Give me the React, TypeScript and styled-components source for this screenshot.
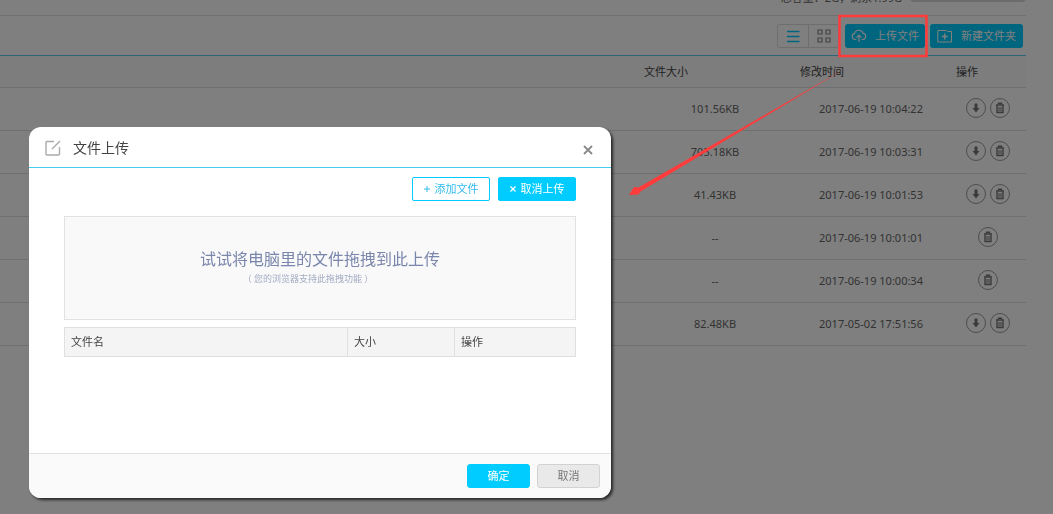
import React from "react";
import styled, { createGlobalStyle, css } from "styled-components";

const GlobalStyle = createGlobalStyle`
  *, *::before, *::after { box-sizing: border-box; }
  body {
    margin: 0;
    background: #fff;
    color: #444;
    font-family: "Noto Sans", "Noto Sans CJK SC", sans-serif;
    font-size: 11px;
    line-height: 16px;
  }
  button { font: inherit; cursor: pointer; }
  svg { display: block; }
`;

const accent = "#00ccff";

const Page = styled.main`
  min-height: 100vh;
  padding-right: 27px;
`;

const CapacityBar = styled.header`
  display: flex;
  align-items: flex-end;
  justify-content: flex-end;
  gap: 8px;
  height: 16px;
  padding-bottom: 9px;
  overflow: hidden;
  border-bottom: 1px solid #e0e0e0;
  color: #666;
`;

const CapacityTrack = styled.div`
  width: 116px;
  height: 10px;
  margin-bottom: 4px;
  border-radius: 4px;
  background: #d8d8d8;
`;

const Toolbar = styled.div`
  display: flex;
  align-items: center;
  justify-content: flex-end;
  height: 40px;
  padding-right: 3px;
  border-bottom: 1px solid #55ccee;
`;

const ViewToggle = styled.div`
  display: flex;
  height: 24px;
  margin-right: 6px;
  border: 1px solid #dcdcdc;
  border-radius: 3px;
`;

const ViewButton = styled.button`
  display: flex;
  align-items: center;
  justify-content: center;
  width: 30px;
  padding: 0;
  border: 0;
  background: none;
  color: #888;

  & + & { border-left: 1px solid #dcdcdc; }
  &[aria-pressed="true"] { color: ${accent}; }
`;

const ToolButton = styled.button`
  display: flex;
  align-items: center;
  gap: 8px;
  height: 24px;
  padding: 0 6px;
  border: 0;
  border-radius: 3px;
  background: ${accent};
  color: #fff;

  & + & {
    margin-left: 5px;
    padding: 0 7px;
  }
`;

const FileTable = styled.table`
  width: 100%;
  border-collapse: separate;
  border-spacing: 0;
  table-layout: fixed;

  th {
    height: 32px;
    padding: 0 7px;
    border-bottom: 1px solid #dedede;
    background: #fafafa;
    font-weight: 400;
    text-align: left;
  }
  td {
    height: 43px;
    padding: 0 7px;
    border-bottom: 1px solid #dedede;
    color: #666;
    text-align: center;
  }
`;

const Col = styled.col<{ $width?: number }>`
  width: ${(p) => (p.$width ? `${p.$width}px` : "auto")};
`;

const RowActions = styled.div`
  display: flex;
  justify-content: center;
  gap: 4px;
  padding-bottom: 2px;
`;

const RoundButton = styled.button`
  display: flex;
  align-items: center;
  justify-content: center;
  width: 20px;
  height: 20px;
  padding: 0;
  border: 1px solid #999;
  border-radius: 50%;
  background: none;
  color: #777;
`;

const Overlay = styled.div`
  position: fixed;
  inset: 0;
  padding: 127px 29px 16px;
  background: rgba(0, 0, 0, 0.5);
`;

const Dialog = styled.section`
  display: flex;
  flex-direction: column;
  max-width: 582px;
  border-radius: 12px;
  background: #fff;
  box-shadow: 2px 2px 3px rgba(0, 0, 0, 0.7);
  overflow: hidden;
`;

const DialogHeader = styled.header`
  display: flex;
  align-items: center;
  gap: 12px;
  height: 41px;
  padding: 2px 18px 0 16px;
  border-bottom: 1px solid #44ccee;
  color: #aaa;
`;

const DialogTitle = styled.h2`
  flex: 1;
  margin: 0;
  color: #444;
  font-size: 14px;
  font-weight: 400;
  line-height: 20px;
`;

const CloseButton = styled.button`
  padding: 3px 0 0;
  border: 0;
  background: none;
  color: #888;
`;

const DialogBody = styled.div`
  min-height: 285px;
  padding: 9px 35px;
`;

const UploadActions = styled.div`
  display: flex;
  justify-content: flex-end;
  gap: 8px;
  margin-bottom: 15px;
`;

const filled = css`
  border-color: ${accent};
  background: ${accent};
  color: #fff;
`;

const UploadButton = styled.button<{ $filled?: boolean }>`
  display: flex;
  align-items: center;
  justify-content: center;
  gap: 5px;
  width: 78px;
  height: 24px;
  padding: 0;
  border: 1px solid ${accent};
  border-radius: 2px;
  background: #fff;
  color: #33bbee;
  ${(p) => p.$filled && filled}
`;

const DropZone = styled.div`
  display: flex;
  flex-direction: column;
  align-items: center;
  justify-content: center;
  height: 104px;
  margin-bottom: 7px;
  padding-bottom: 2px;
  border: 1px solid #e2e2e2;
  background: #f9f9f9;
  text-align: center;
`;

const DropTitle = styled.p`
  margin: 0;
  color: #7a86ab;
  font-size: 16px;
  line-height: 24px;
`;

const DropHint = styled.p`
  margin: 0;
  padding-right: 24px;
  color: #a3abc4;
  font-size: 9px;
  line-height: 16px;
`;

const QueueTable = styled.table`
  width: 100%;
  border: 1px solid #e0e0e0;
  border-collapse: collapse;
  table-layout: fixed;

  th {
    height: 29px;
    padding: 0 6px;
    border: 1px solid #e0e0e0;
    background: #f4f4f4;
    font-weight: 400;
    text-align: left;
  }
`;

const DialogFooter = styled.footer`
  display: flex;
  justify-content: flex-end;
  gap: 7px;
  height: 45px;
  padding: 10px 11px;
  border-top: 1px solid #e0e0e0;
  background: #fafafa;
`;

const FooterButton = styled.button<{ $filled?: boolean }>`
  width: 63px;
  height: 24px;
  padding: 0;
  border: 1px solid #d2d2d2;
  border-radius: 3px;
  background: #e9e9e9;
  color: #777;
  ${(p) => p.$filled && filled}
`;

const Annotation = styled.svg`
  position: absolute;
  top: 0;
  right: 0;
  pointer-events: none;
`;

const ListIcon = () => (
  <svg width="14" height="14" viewBox="0 0 14 14" stroke="currentColor" strokeWidth="1.4" aria-hidden="true">
    <path d="M1 2.500h12.500M1 7.500h12.500M1 12.500h12.500" />
  </svg>
);

const GridIcon = () => (
  <svg width="14" height="14" viewBox="0 0 14 14" fill="none" stroke="currentColor" strokeWidth="1.2" aria-hidden="true">
    <path d="M1 1h4v4H1zM9 1h4v4H9zM1 9h4v4H1zM9 9h4v4H9z" />
  </svg>
);

const CloudUploadIcon = () => (
  <svg width="16" height="14" viewBox="0 0 16 14" fill="none" stroke="currentColor" strokeWidth="1.2" aria-hidden="true">
    <path d="M5.5 10.5H4A3 3 0 0 1 3.4 4.6A4.6 4.6 0 0 1 12.2 4.4A3.1 3.1 0 0 1 12 10.5H10.500M8 13V6.500M5.500 8.700L8 6.200l2.500 2.500" />
  </svg>
);

const FolderPlusIcon = () => (
  <svg width="16" height="14" viewBox="0 0 16 14" fill="none" stroke="currentColor" aria-hidden="true">
    <path d="M.8 1.500h8.500l1.200 1H14.500v10.500H.8z" />
    <path d="M7.700 4.500v6M4.700 7.500h6" strokeWidth="1.500" />
  </svg>
);

const DownloadIcon = () => (
  <svg width="10" height="12" viewBox="0 0 10 12" fill="currentColor" aria-hidden="true">
    <path d="M3.500 1.500h3V6h2L5 10.500L1.500 6h2z" />
  </svg>
);

const TrashIcon = () => (
  <svg width="10" height="12" viewBox="0 0 10 12" fill="none" stroke="currentColor" aria-hidden="true">
    <path d="M1 3h8" strokeWidth="1.500" />
    <path d="M3.500 2.500V1.300h3v1.200M2 3.500v7h6v-7" strokeWidth="1.400" />
    <path d="M4 5v4.500M6 5v4.500" strokeWidth="1.100" />
  </svg>
);

const EditIcon = () => (
  <svg width="16" height="16" viewBox="0 0 16 16" fill="none" stroke="currentColor" strokeWidth="1.400" aria-hidden="true">
    <path d="M9 1.500H2a1 1 0 0 0-1 1V14a1 1 0 0 0 1 1h11.500a1 1 0 0 0 1-1V7M7 9l8-8" />
  </svg>
);

const CloseIcon = () => (
  <svg width="10" height="10" viewBox="0 0 10 10" stroke="currentColor" strokeWidth="1.800" aria-hidden="true">
    <path d="M1 1l8 8M9 1l-8 8" />
  </svg>
);

const PlusIcon = () => (
  <svg width="6" height="6" viewBox="0 0 6 6" stroke="currentColor" aria-hidden="true">
    <path d="M3 0v6M0 3h6" />
  </svg>
);

const CrossIcon = () => (
  <svg width="6" height="6" viewBox="0 0 6 6" stroke="currentColor" strokeWidth="1.200" aria-hidden="true">
    <path d="M.5.5l5 5M5.500.5l-5 5" />
  </svg>
);

interface FileEntry {
  size: string;
  modified: string;
  downloadable: boolean;
}

const files: FileEntry[] = [
  { size: "101.56KB", modified: "2017-06-19 10:04:22", downloadable: true },
  { size: "705.18KB", modified: "2017-06-19 10:03:31", downloadable: true },
  { size: "41.43KB", modified: "2017-06-19 10:01:53", downloadable: true },
  { size: "--", modified: "2017-06-19 10:01:01", downloadable: false },
  { size: "--", modified: "2017-06-19 10:00:34", downloadable: false },
  { size: "82.48KB", modified: "2017-05-02 17:51:56", downloadable: true },
];

export default function App() {
  return (
    <>
      <GlobalStyle />
      <Page>
        <CapacityBar>
          <span>总容量：2G，剩余1.99G</span>
          <CapacityTrack />
        </CapacityBar>
        <Toolbar>
          <ViewToggle>
            <ViewButton aria-label="列表" aria-pressed="true"><ListIcon /></ViewButton>
            <ViewButton aria-label="网格" aria-pressed="false"><GridIcon /></ViewButton>
          </ViewToggle>
          <ToolButton><CloudUploadIcon />上传文件</ToolButton>
          <ToolButton><FolderPlusIcon />新建文件夹</ToolButton>
        </Toolbar>
        <FileTable>
          <colgroup>
            <Col />
            <Col $width={156} />
            <Col $width={156} />
            <Col $width={77} />
          </colgroup>
          <thead>
            <tr>
              <th />
              <th>文件大小</th>
              <th>修改时间</th>
              <th>操作</th>
            </tr>
          </thead>
          <tbody>
            {files.map((file) => (
              <tr key={file.modified}>
                <td />
                <td>{file.size}</td>
                <td>{file.modified}</td>
                <td>
                  <RowActions>
                    {file.downloadable && (
                      <RoundButton aria-label="下载"><DownloadIcon /></RoundButton>
                    )}
                    <RoundButton aria-label="删除"><TrashIcon /></RoundButton>
                  </RowActions>
                </td>
              </tr>
            ))}
          </tbody>
        </FileTable>
      </Page>

      <Overlay>
        <Dialog role="dialog" aria-labelledby="upload-title">
          <DialogHeader>
            <EditIcon />
            <DialogTitle id="upload-title">文件上传</DialogTitle>
            <CloseButton aria-label="关闭"><CloseIcon /></CloseButton>
          </DialogHeader>
          <DialogBody>
            <UploadActions>
              <UploadButton><PlusIcon />添加文件</UploadButton>
              <UploadButton $filled><CrossIcon />取消上传</UploadButton>
            </UploadActions>
            <DropZone>
              <DropTitle>试试将电脑里的文件拖拽到此上传</DropTitle>
              <DropHint>（ 您的浏览器支持此拖拽功能 ）</DropHint>
            </DropZone>
            <QueueTable>
              <colgroup>
                <Col />
                <Col $width={107} />
                <Col $width={121} />
              </colgroup>
              <thead>
                <tr>
                  <th>文件名</th>
                  <th>大小</th>
                  <th>操作</th>
                </tr>
              </thead>
            </QueueTable>
          </DialogBody>
          <DialogFooter>
            <FooterButton $filled>确定</FooterButton>
            <FooterButton>取消</FooterButton>
          </DialogFooter>
        </Dialog>
        <Annotation width="433" height="210" viewBox="620 0 433 210" aria-hidden="true">
          <rect x="839.500" y="16" width="87" height="40" fill="none" stroke="#ff3b3b" strokeWidth="2.500" />
          <path d="M846 68L640.500 191.500L638.500 194.500L629 195L634 187L638.500 187.500Z" fill="#ff3b3b" />
        </Annotation>
      </Overlay>
    </>
  );
}
